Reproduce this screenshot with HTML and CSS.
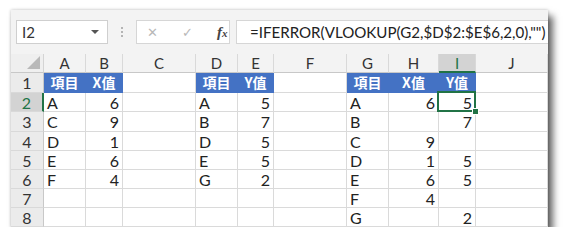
FILE: index.html
```html
<!DOCTYPE html>
<html lang="zh-TW">
<head>
  <meta charset="UTF-8">
  <title>IFERROR VLOOKUP</title>
  <link rel="stylesheet" href="styles.css">
</head>
<body>
  <div class="window">
    <div class="toolbar">
      <div class="namebox">
        <span>I2</span>
        <span class="drop"></span>
      </div>
      <div class="grip">
        <span></span><span></span><span></span>
      </div>
      <div class="buttons">
        <span class="btn">✕</span>
        <span class="btn">✓</span>
        <span class="fx"><i>f</i><i class="x">x</i></span>
      </div>
      <div class="formula">=IFERROR(VLOOKUP(G2,$D$2:$E$6,2,0),"")</div>
    </div>

    <div class="sheet">
      <div class="corner"><span class="tri"></span></div>
      <div class="colhead">A</div>
      <div class="colhead">B</div>
      <div class="colhead">C</div>
      <div class="colhead">D</div>
      <div class="colhead">E</div>
      <div class="colhead">F</div>
      <div class="colhead">G</div>
      <div class="colhead">H</div>
      <div class="colhead active">I</div>
      <div class="colhead">J</div>

      <div class="rowhead">1</div>
      <div class="cell th">項目</div>
      <div class="cell th">X值</div>
      <div class="cell"></div>
      <div class="cell th">項目</div>
      <div class="cell th">Y值</div>
      <div class="cell"></div>
      <div class="cell th">項目</div>
      <div class="cell th">X值</div>
      <div class="cell th">Y值</div>
      <div class="cell"></div>

      <div class="rowhead active">2</div>
      <div class="cell">A</div>
      <div class="cell num">6</div>
      <div class="cell"></div>
      <div class="cell">A</div>
      <div class="cell num">5</div>
      <div class="cell"></div>
      <div class="cell">A</div>
      <div class="cell num">6</div>
      <div class="cell num selected">5</div>
      <div class="cell"></div>

      <div class="rowhead">3</div>
      <div class="cell">C</div>
      <div class="cell num">9</div>
      <div class="cell"></div>
      <div class="cell">B</div>
      <div class="cell num">7</div>
      <div class="cell"></div>
      <div class="cell">B</div>
      <div class="cell num"></div>
      <div class="cell num">7</div>
      <div class="cell"></div>

      <div class="rowhead">4</div>
      <div class="cell">D</div>
      <div class="cell num">1</div>
      <div class="cell"></div>
      <div class="cell">D</div>
      <div class="cell num">5</div>
      <div class="cell"></div>
      <div class="cell">C</div>
      <div class="cell num">9</div>
      <div class="cell num"></div>
      <div class="cell"></div>

      <div class="rowhead">5</div>
      <div class="cell">E</div>
      <div class="cell num">6</div>
      <div class="cell"></div>
      <div class="cell">E</div>
      <div class="cell num">5</div>
      <div class="cell"></div>
      <div class="cell">D</div>
      <div class="cell num">1</div>
      <div class="cell num">5</div>
      <div class="cell"></div>

      <div class="rowhead">6</div>
      <div class="cell">F</div>
      <div class="cell num">4</div>
      <div class="cell"></div>
      <div class="cell">G</div>
      <div class="cell num">2</div>
      <div class="cell"></div>
      <div class="cell">E</div>
      <div class="cell num">6</div>
      <div class="cell num">5</div>
      <div class="cell"></div>

      <div class="rowhead">7</div>
      <div class="cell"></div>
      <div class="cell"></div>
      <div class="cell"></div>
      <div class="cell"></div>
      <div class="cell"></div>
      <div class="cell"></div>
      <div class="cell">F</div>
      <div class="cell num">4</div>
      <div class="cell num"></div>
      <div class="cell"></div>

      <div class="rowhead">8</div>
      <div class="cell"></div>
      <div class="cell"></div>
      <div class="cell"></div>
      <div class="cell"></div>
      <div class="cell"></div>
      <div class="cell"></div>
      <div class="cell">G</div>
      <div class="cell num"></div>
      <div class="cell num">2</div>
      <div class="cell"></div>
    </div>
  </div>
</body>
</html>
```

FILE: styles.css
```css
body {
  margin: 0;
  background: #fff;
  font-family: Lato, "Noto Sans CJK TC", sans-serif;
  color: #222;
}
.window {
  margin: 10px 0 0 11px;
  width: 537px;
  height: 217px;
  background: #f3f3f3;
  box-shadow: 0 0 3px rgba(0, 0, 0, 0.25), 5px 6px 7px rgba(0, 0, 0, 0.6);
  overflow: hidden;
}
.toolbar {
  height: 44px;
  display: flex;
  align-items: flex-start;
  padding: 10px 0 0 5px;
  box-sizing: border-box;
}
.namebox {
  width: 92px;
  height: 24px;
  box-sizing: border-box;
  background: #fff;
  border: 1px solid #cfcfcf;
  display: flex;
  align-items: center;
  justify-content: space-between;
  padding: 0 8px 0 5px;
  font-size: 15px;
  color: #333;
}
.drop {
  width: 0;
  height: 0;
  border-left: 4px solid transparent;
  border-right: 4px solid transparent;
  border-top: 4px solid #555;
}
.grip {
  width: 28px;
  height: 24px;
  display: flex;
  flex-direction: column;
  align-items: center;
  justify-content: center;
  gap: 2px;
}
.grip span {
  width: 2px;
  height: 2px;
  background: #b4b4b4;
}
.buttons {
  width: 94px;
  height: 24px;
  box-sizing: border-box;
  background: #fff;
  border: 1px solid #d6d6d6;
  display: flex;
  align-items: center;
  padding-left: 10px;
  font-family: "DejaVu Sans", sans-serif;
}
.btn {
  width: 35px;
  font-size: 13px;
  color: #b8b8b8;
}
.fx {
  font-family: "Liberation Serif", serif;
  font-size: 15px;
  color: #444;
  font-weight: bold;
}
.fx .x {
  font-size: 11px;
}
.formula {
  margin-left: 6px;
  flex: 1;
  height: 24px;
  box-sizing: border-box;
  background: #fff;
  border: 1px solid #d6d6d6;
  border-right: none;
  padding: 0 0 0 13px;
  font-size: 15.1px;
  line-height: 22px;
  color: #222;
  white-space: nowrap;
}
.sheet {
  display: grid;
  grid-template-columns: 33px 42px 37px 73px 42px 36px 73px 42px 50px 37px 72px;
  grid-template-rows: 19px 20px 19px 20px 19px 19px 19px 19px 19px;
  background: #fff;
}
.corner {
  background: #efefef;
  border-right: 1px solid #d4d4d4;
  border-bottom: 1px solid #c8c8c8;
  display: flex;
  align-items: flex-end;
  justify-content: flex-end;
  padding: 0 3px 3px 0;
}
.tri {
  width: 0;
  height: 0;
  border-left: 13px solid transparent;
  border-bottom: 13px solid #b9b9b9;
}
.colhead {
  background: #f3f3f3;
  border-right: 1px solid #d9d9d9;
  border-bottom: 1px solid #c8c8c8;
  text-align: center;
  font-size: 15px;
  line-height: 18px;
  color: #333;
}
.colhead.active {
  background: #d3d3d3;
  color: #217346;
  border-bottom: 2px solid #217346;
}
.rowhead {
  background: #ebebeb;
  border-right: 1px solid #c8c8c8;
  border-bottom: 1px solid #d9d9d9;
  text-align: center;
  font-size: 16px;
  line-height: 19px;
  color: #333;
}
.rowhead.active {
  background: #d3d3d3;
  color: #217346;
  border-right: 2px solid #217346;
}
.cell {
  box-sizing: border-box;
  border-right: 1px solid #dadada;
  border-bottom: 1px solid #dadada;
  padding: 0 3px;
  font-size: 16px;
  line-height: 19px;
  color: #222;
  white-space: nowrap;
}
.num {
  text-align: right;
}
.th {
  background: #4472c4;
  border-color: #4472c4;
  color: #fff;
  text-align: center;
  font-family: "Noto Sans CJK TC", sans-serif;
  font-size: 14px;
  font-weight: bold;
  line-height: 19px;
}
.selected {
  position: relative;
}
.selected::after {
  content: "";
  position: absolute;
  left: -2px;
  top: -2px;
  right: -1px;
  bottom: -1px;
  border: 2px solid #217346;
}
.selected::before {
  content: "";
  position: absolute;
  right: -4px;
  bottom: -4px;
  width: 5px;
  height: 5px;
  background: #217346;
  border: 1px solid #fff;
  z-index: 1;
}
```
